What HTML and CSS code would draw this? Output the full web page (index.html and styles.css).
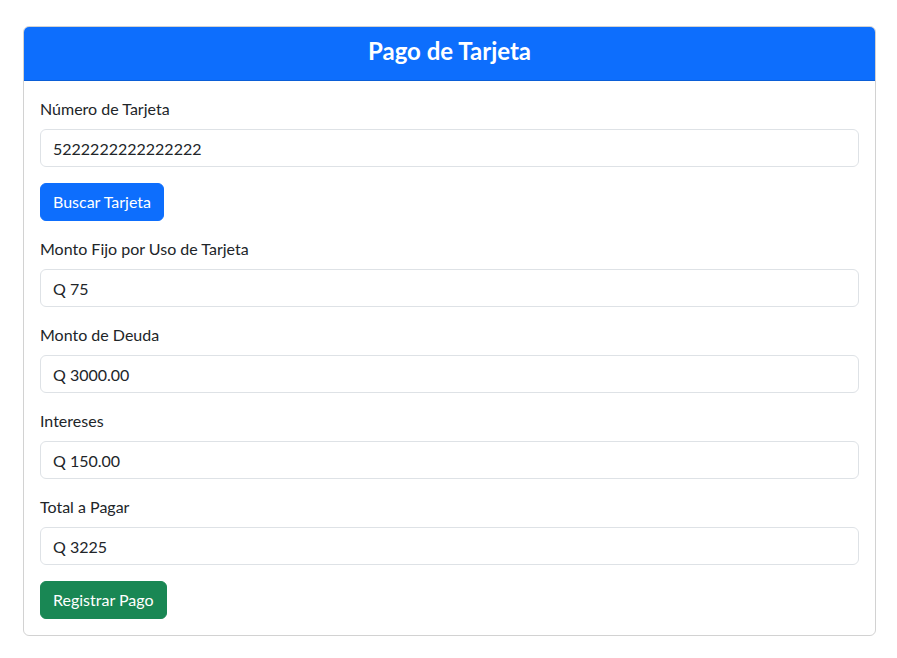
FILE: index.html
```html
<!DOCTYPE html>
<html lang="es">
<head>
<meta charset="utf-8">
<title>Pago de Tarjeta</title>
<link rel="stylesheet" href="styles.css">
</head>
<body>
<div class="container">
  <div class="card">
    <div class="card-header">
      <h3 class="title">Pago de Tarjeta</h3>
    </div>
    <div class="card-body">
      <div class="field">
        <label class="label">Número de Tarjeta</label>
        <input class="input" type="text" value="5222222222222222">
      </div>
      <button class="btn btn-primary">Buscar Tarjeta</button>
      <div class="field">
        <label class="label">Monto Fijo por Uso de Tarjeta</label>
        <input class="input" type="text" value="Q 75" readonly>
      </div>
      <div class="field">
        <label class="label">Monto de Deuda</label>
        <input class="input" type="text" value="Q 3000.00" readonly>
      </div>
      <div class="field">
        <label class="label">Intereses</label>
        <input class="input" type="text" value="Q 150.00" readonly>
      </div>
      <div class="field">
        <label class="label">Total a Pagar</label>
        <input class="input" type="text" value="Q 3225" readonly>
      </div>
      <button class="btn btn-success">Registrar Pago</button>
    </div>
  </div>
</div>
</body>
</html>
```
FILE: styles.css
```css
* { box-sizing: border-box; }
body {
  margin: 0;
  font-family: "Segoe UI", Lato, "Noto Sans", sans-serif;
  font-size: 16px;
  line-height: 1.5;
  color: #212529;
  background: #fff;
}
.container {
  padding: 26px 20px 0 23px;
}
.card {
  border: 1px solid rgba(0,0,0,.175);
  border-radius: 6px;
  overflow: hidden;
  width: 853px;
}
.card-header {
  background: #0d6efd;
  border-bottom: 1px solid #0b5ed7;
  padding: 9px 16px 14px;
  text-align: center;
  color: #fff;
}
.title {
  margin: 0;
  font-size: 24px;
  font-weight: 700;
  line-height: 30px;
}
.card-body {
  padding: 16px;
  display: flex;
  flex-direction: column;
  align-items: flex-start;
}
.field {
  width: 100%;
  margin-bottom: 16px;
}
.label {
  display: block;
  margin-bottom: 8px;
  line-height: 24px;
}
.input {
  display: block;
  width: 100%;
  height: 38px;
  padding: 6px 12px;
  font: inherit;
  color: #212529;
  border: 1px solid #dee2e6;
  border-radius: 6px;
  background: #fff;
  outline: none;
}
.btn {
  font: inherit;
  line-height: 24px;
  padding: 6px 12px;
  border: 1px solid transparent;
  border-radius: 6px;
  color: #fff;
  height: 38px;
}
.btn-primary {
  background: #0d6efd;
  border-color: #0d6efd;
  margin-bottom: 16px;
}
.btn-success {
  background: #198754;
  border-color: #198754;
}
```
